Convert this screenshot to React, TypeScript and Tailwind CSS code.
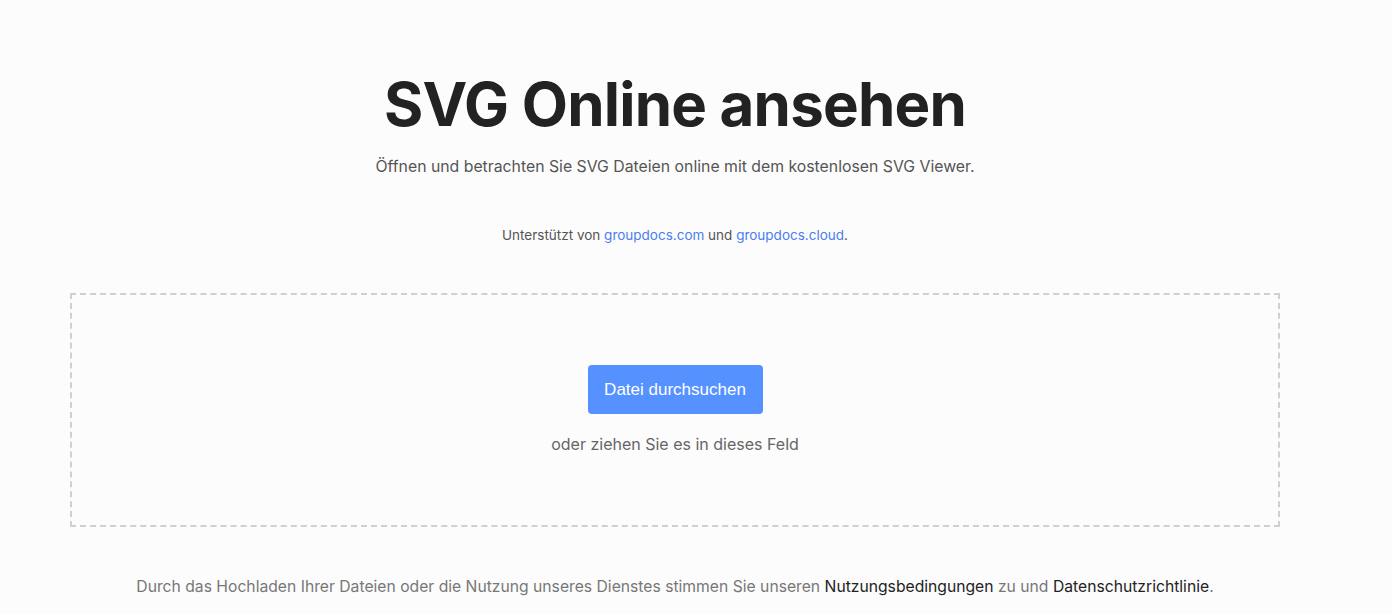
import React from "react";

export default function App() {
  return (
    <div className="min-h-[614px] w-full bg-[#fcfcfc] font-['Inter',sans-serif]">
      <div className="w-[1350px] px-[70px] flex flex-col items-center">
        <h1 className="mt-[66px] text-[60px] leading-[76px] font-bold text-[#222] tracking-[-0.8px]">
          SVG Online ansehen
        </h1>
        <p className="mt-[13px] text-[15.8px] leading-[24px] text-[#555]">
          Öffnen und betrachten Sie SVG Dateien online mit dem kostenlosen SVG Viewer.
        </p>
        <p className="mt-[46px] text-[13.5px] leading-[20px] text-[#555]">
          Unterstützt von <a className="text-[#4a7ff0]">groupdocs.com</a> und{" "}
          <a className="text-[#4a7ff0]">groupdocs.cloud</a>.
        </p>
        <div className="mt-[48px] w-full h-[234px] border-2 border-dashed border-[#d0d0d0] flex flex-col items-center pt-[70px]">
          <button className="w-[175px] h-[49px] rounded-[4px] bg-[#5591ff] text-white text-[17px] font-['Liberation_Sans',sans-serif]">
            Datei durchsuchen
          </button>
          <p className="mt-[18px] text-[16px] leading-[24px] text-[#666]">
            oder ziehen Sie es in dieses Feld
          </p>
        </div>
        <p className="mt-[48px] text-[15.7px] leading-[24px] text-[#777]">
          Durch das Hochladen Ihrer Dateien oder die Nutzung unseres Dienstes stimmen Sie unseren{" "}
          <a className="text-[#222]">Nutzungsbedingungen</a> zu und{" "}
          <a className="text-[#222]">Datenschutzrichtlinie</a>.
        </p>
      </div>
    </div>
  );
}
